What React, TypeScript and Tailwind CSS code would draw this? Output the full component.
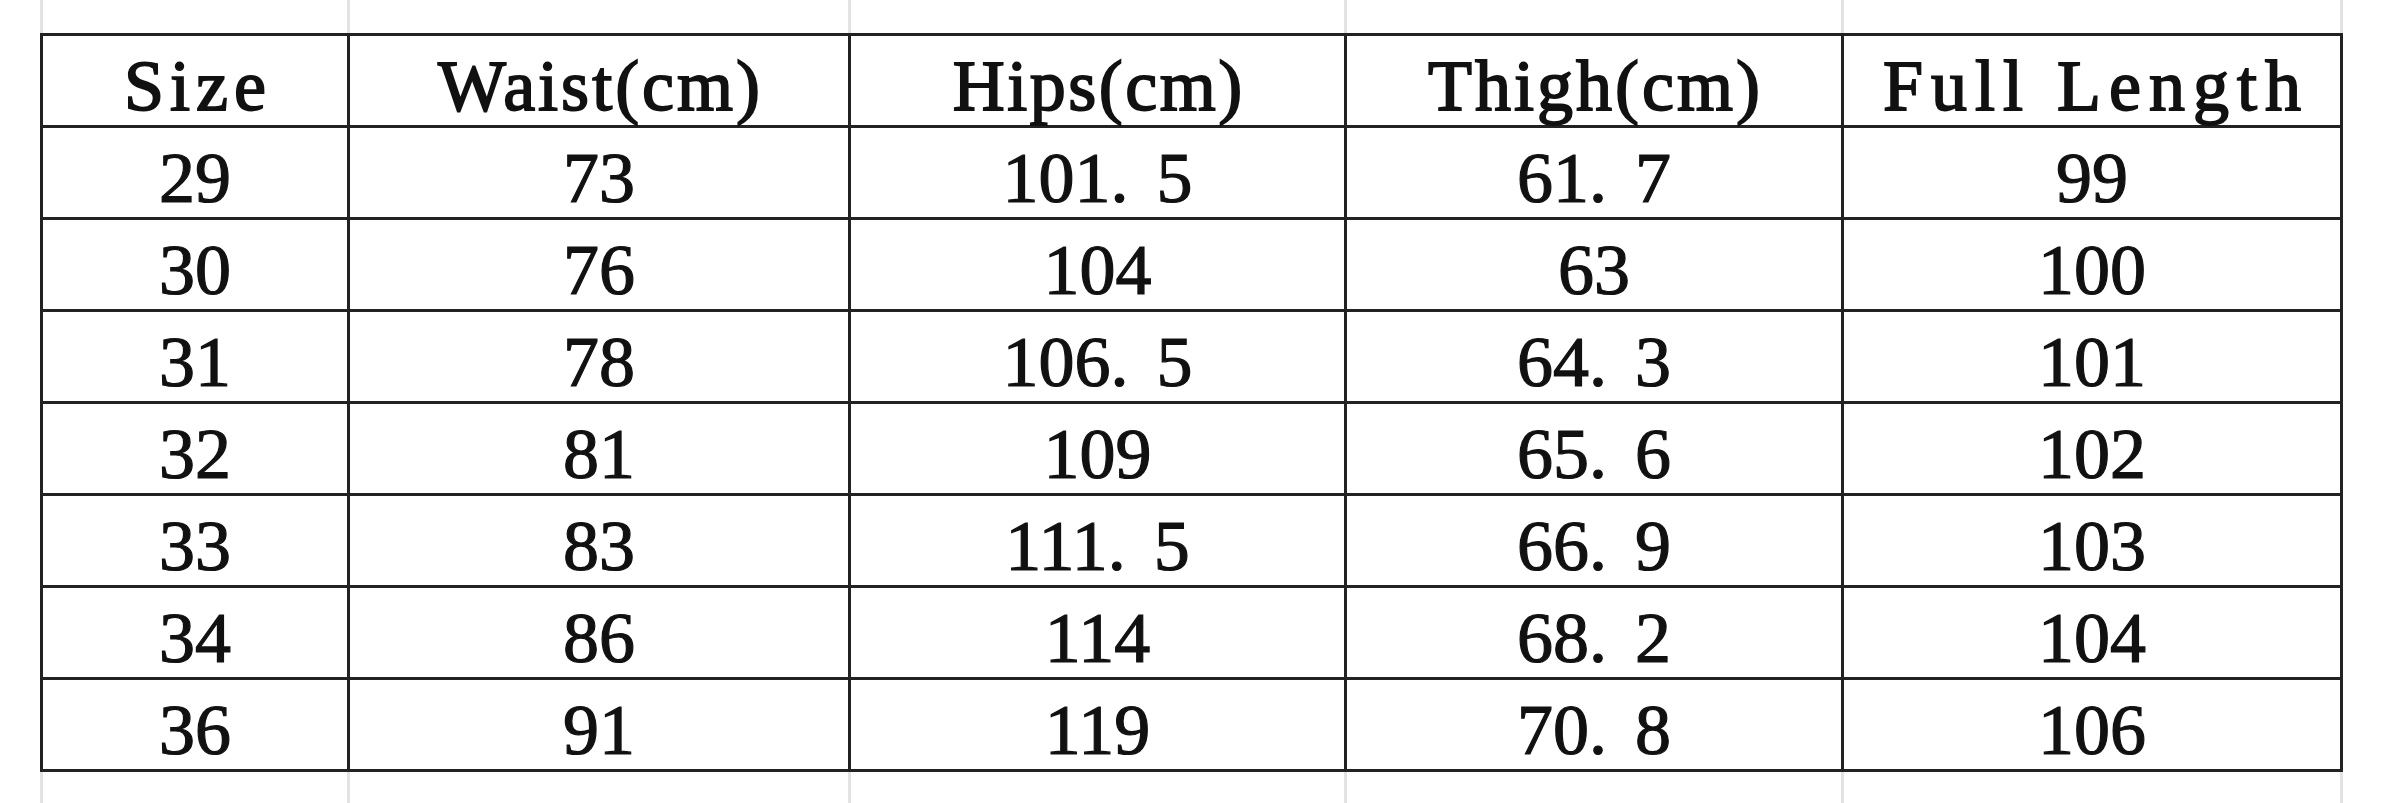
import React from "react";

const cols = ["w-[307px]", "w-[501px]", "w-[496px]", "w-[497px]", "w-[499px]"];

const headers: { t: string; ls: string }[] = [
  { t: "Size", ls: "tracking-[6px] pl-[6px]" },
  { t: "Waist(cm)", ls: "tracking-[3px] pl-[3px]" },
  { t: "Hips(cm)", ls: "tracking-[2.5px] pl-[2.5px]" },
  { t: "Thigh(cm)", ls: "tracking-[3px] pl-[3px]" },
  { t: "Full Length", ls: "tracking-[8px] pl-[8px]" },
];

const rows: string[][] = [
  ["29", "73", "101.5", "61.7", "99"],
  ["30", "76", "104", "63", "100"],
  ["31", "78", "106.5", "64.3", "101"],
  ["32", "81", "109", "65.6", "102"],
  ["33", "83", "111.5", "66.9", "103"],
  ["34", "86", "114", "68.2", "104"],
  ["36", "91", "119", "70.8", "106"],
];

function Num({ v }: { v: string }) {
  const i = v.indexOf(".");
  if (i < 0) return <span>{v}</span>;
  return (
    <span>
      {v.slice(0, i)}
      <span className="mr-[28px]">.</span>
      {v.slice(i + 1)}
    </span>
  );
}

function GridStrip({ h }: { h: string }) {
  return (
    <div className={`flex ${h}`}>
      <div className="w-[40px] shrink-0" />
      <div className="flex border-l-[3px] border-[#e3e3e3]">
        {cols.map((c, i) => (
          <div key={i} className={`${c} shrink-0 border-r-[3px] border-[#e3e3e3]`} />
        ))}
      </div>
    </div>
  );
}

export default function App() {
  return (
    <div className="w-[2391px] h-[803px] bg-white overflow-hidden font-['Liberation_Serif',serif] text-[#111111]">
      <GridStrip h="h-[33px]" />
      <div className="flex">
        <div className="w-[40px] shrink-0" />
        <div className="border-l-[3px] border-t-[3px] border-[#222222]">
          <div className="flex">
            {headers.map((h, i) => (
              <div
                key={i}
                className={`${cols[i]} h-[92px] shrink-0 border-r-[3px] border-b-[3px] border-[#222222] flex items-center justify-center pt-[10px]`}
              >
                <span
                  className={`text-[72px] leading-none whitespace-pre [-webkit-text-stroke:1.8px_#111111] ${h.ls}`}
                >
                  {h.t}
                </span>
              </div>
            ))}
          </div>
          {rows.map((r, ri) => (
            <div key={ri} className="flex">
              {r.map((v, ci) => (
                <div
                  key={ci}
                  className={`${cols[ci]} h-[92px] shrink-0 border-r-[3px] border-b-[3px] border-[#222222] flex items-center justify-center pt-[10px]`}
                >
                  <span className="text-[72px] leading-none [-webkit-text-stroke:1.2px_#111111]">
                    <Num v={v} />
                  </span>
                </div>
              ))}
            </div>
          ))}
        </div>
      </div>
      <GridStrip h="h-[40px]" />
    </div>
  );
}
